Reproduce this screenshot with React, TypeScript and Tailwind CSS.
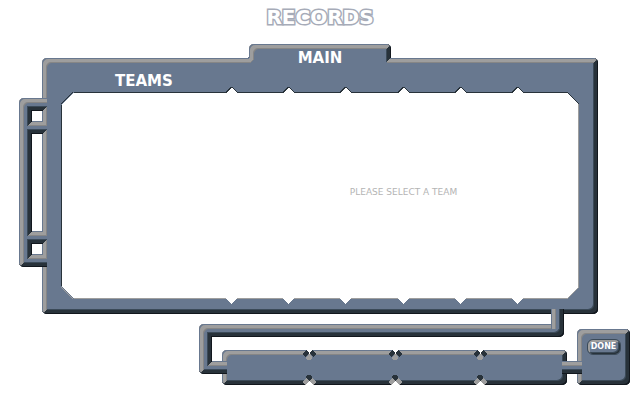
import React from "react";

const RAISED =
  "bg-[#68788f] shadow-[inset_1px_1px_#68788f,inset_-1px_-1px_#12171d,inset_2px_2px_#9e9e9e,inset_-2px_-2px_#28323a,inset_3px_3px_#9e9e9e,inset_-3px_-3px_#28323a,inset_4px_4px_#9e9e9e,inset_-4px_-4px_#28323a,inset_5px_5px_#868686,inset_-5px_-5px_#3b4a58]";

const SUNKEN =
  "bg-white shadow-[inset_1px_1px_#3b4a58,inset_-1px_-1px_#868686,inset_2px_2px_#28323a,inset_-2px_-2px_#9e9e9e,inset_3px_3px_#28323a,inset_-3px_-3px_#9e9e9e,inset_4px_4px_#28323a,inset_-4px_-4px_#9e9e9e,inset_5px_5px_#12171d,inset_-5px_-5px_#68788f]";

const PIPE_ACROSS =
  "bg-[linear-gradient(to_bottom,#68788f_1px,#9e9e9e_1px_4px,#868686_4px_5px,#68788f_5px_8px,#3b4a58_8px_9px,#28323a_9px_12px,#12171d_12px)]";

const PIPE_DOWN =
  "bg-[linear-gradient(to_right,#68788f_1px,#9e9e9e_1px_4px,#868686_4px_5px,#68788f_5px_8px,#3b4a58_8px_9px,#28323a_9px_12px,#12171d_12px)]";

const FONT = "font-['DejaVu_Sans',sans-serif]";

function Handle() {
  return (
    <div className="z-10 mt-[40px] -mr-[5px] w-[28px] shrink-0 self-start overflow-hidden">
      <div className={`flex w-[40px] flex-col gap-[3px] rounded-[5px] py-2 pl-2 ${RAISED}`}>
        <div className={`h-5 w-5 ${SUNKEN}`} />
        <div className={`h-[107px] w-5 ${SUNKEN}`} />
        <div className={`h-5 w-5 ${SUNKEN}`} />
      </div>
    </div>
  );
}

function Tab() {
  return (
    <div className="relative z-10 -mb-[5px] h-[19px] w-[142px] self-center">
      <div className="h-full overflow-hidden">
        <div className={`h-8 rounded-[5px] ${RAISED}`} />
      </div>
      <svg className="absolute bottom-0 -left-[3px]" width="8" height="8" viewBox="0 0 8 8" shapeRendering="crispEdges" aria-hidden="true">
        <path d="M3 0H8V8H0V3H2V2H3Z" fill="#68788f" />
        <path d="M4 0H7V6H6V7H0V4H3V3H4Z" fill="#9e9e9e" />
        <path d="M7 0H8V5H7V6H6V7H5V8H0V7H5V6H6V5H7Z" fill="#868686" />
      </svg>
      <svg className="absolute right-0 bottom-0" width="5" height="5" viewBox="0 0 5 5" shapeRendering="crispEdges" aria-hidden="true">
        <path d="M5 0V5H0V4H1V3H2V2H3V1H4V0Z" fill="#9e9e9e" />
        <path d="M1 4H5V5H1Z" fill="#868686" />
        <path d="M4 0H5V1H4ZM0 4H1V5H0Z" fill="#68788f" />
      </svg>
    </div>
  );
}

function Teeth({ down = false }: { down?: boolean }) {
  return (
    <div className={`z-10 flex justify-between pr-[55px] pl-[164px] ${down ? "-mt-px" : "-mb-px"}`}>
      {[0, 1, 2, 3, 4, 5].map((i) => (
        <svg key={i} className="block" width="13" height="6" viewBox="0 0 13 6" shapeRendering="crispEdges" aria-hidden="true">
          {down ? (
            <path d="M1 0H12L7 6H6Z" fill="#fff" />
          ) : (
            <>
              <path d="M0 6V5H1V4H2V3H3V2H4V1H5V0H8V1H9V2H10V3H11V4H12V5H13V6Z" fill="#28323a" />
              <path d="M1 6L6 1H7L12 6Z" fill="#fff" />
            </>
          )}
        </svg>
      ))}
    </div>
  );
}

function Corner({ place, line }: { place: string; line: string }) {
  return (
    <svg className={`absolute ${place}`} width="13" height="13" viewBox="0 0 13 13" shapeRendering="crispEdges" aria-hidden="true">
      <path d="M0 0H13L0 13Z" fill="#68788f" />
      <path d="M12 0L0 12" stroke={line} strokeWidth="1" />
    </svg>
  );
}

function Notch({ down = false }: { down?: boolean }) {
  return (
    <svg className="block" width="14" height="10" viewBox="0 0 14 10" shapeRendering="crispEdges" aria-hidden="true">
      {down ? (
        <>
          <path d="M3 10L7 6L11 10Z" fill="#fff" />
          <path d="M4 1H5V0H9V1H10V3L7 6L4 3Z" fill="#28323a" />
          <path d="M0 7L4 3L7 6L3 10Z" fill="#9e9e9e" />
          <path d="M14 7L10 3L7 6L11 10Z" fill="#9e9e9e" />
        </>
      ) : (
        <>
          <path d="M3 0L7 4L11 0Z" fill="#fff" />
          <path d="M4 7L7 4L10 7V9H9V10H5V9H4Z" fill="#9e9e9e" />
          <path d="M0 4L4 0L7 3L3 7Z" fill="#28323a" />
          <path d="M14 4L10 0L7 3L11 7Z" fill="#28323a" />
        </>
      )}
    </svg>
  );
}

export default function App() {
  return (
    <main className={`flex min-h-screen flex-col bg-white ${FONT}`}>
      <h1 className="pt-[5px] text-center text-[20px] leading-6 font-bold text-white [-webkit-text-stroke:3px_#a6abb8] [paint-order:stroke_fill]">
        RECORDS
      </h1>

      <div className="mt-[15px] flex flex-col">
        <Tab />
        <div className="flex pr-[42px] pl-[19px]">
          <Handle />
          <section className={`flex min-w-0 flex-1 flex-col rounded-[5px] px-[19px] pb-[10px] ${RAISED}`}>
            <h2 className="z-20 -mt-2 text-center text-[15px] leading-4 font-bold text-white">MAIN</h2>
            <h3 className="mt-[7px] h-[14px] pl-[54px] text-[15px] leading-4 font-bold text-white">TEAMS</h3>
            <Teeth />
            <div className="relative flex h-[207px] items-center border border-t-[#28323a] border-r-[#9e9e9e] border-b-[#9e9e9e] border-l-[#28323a] bg-white pb-2">
              <Corner place="-top-px -left-px" line="#28323a" />
              <Corner place="-top-px -right-px rotate-90" line="#28323a" />
              <Corner place="-right-px -bottom-px rotate-180" line="#9e9e9e" />
              <Corner place="-bottom-px -left-px -rotate-90" line="#9e9e9e" />
              <p className="w-full pl-[167px] text-center text-[9px] leading-3 text-[#b4b4b4]">PLEASE SELECT A TEAM</p>
            </div>
            <Teeth down />
          </section>
        </div>
      </div>

      <div className="z-10 -mt-[5px] flex flex-col pr-[76px] pl-[212px]">
        <div className={`z-10 h-5 w-[13px] self-end ${PIPE_DOWN}`} />
        <div className="-mt-[5px] overflow-hidden">
          <div className={`-ml-3 h-[13px] rounded-[5px] ${RAISED}`} />
        </div>
      </div>

      <footer className="-mt-[13px] flex items-end pr-[10px] pl-[199px]">
        <div className="mb-[11px] w-[23px] shrink-0 overflow-hidden">
          <div className={`w-10 rounded-[5px] py-2 pl-2 ${RAISED}`}>
            <div className={`h-[34px] w-10 ${SUNKEN}`} />
          </div>
        </div>
        <div className={`z-10 -mr-[5px] mb-[11px] h-[13px] w-[5px] ${PIPE_ACROSS}`} />
        <div className={`flex h-[35px] flex-1 flex-col justify-between rounded-[5px] ${RAISED}`}>
          <div className="flex justify-between px-20">
            <Notch />
            <Notch />
            <Notch />
          </div>
          <div className="flex justify-between px-20">
            <Notch down />
            <Notch down />
            <Notch down />
          </div>
        </div>
        <div className={`z-10 -mx-[5px] mb-[11px] h-[13px] w-5 ${PIPE_ACROSS}`} />
        <div className={`flex h-14 w-[53px] flex-col items-center rounded-[5px] pt-[10px] ${RAISED}`}>
          <button
            type="button"
            className="h-4 w-[34px] rounded-[6px] border border-[#3b4a58] bg-[#68788f] text-center text-[8px] leading-[14px] font-bold text-white shadow-[inset_1px_1px_#9e9e9e,inset_-1px_-1px_#28323a,inset_2px_2px_#9e9e9e,inset_-2px_-2px_#3b4a58]"
          >
            DONE
          </button>
        </div>
      </footer>
    </main>
  );
}
